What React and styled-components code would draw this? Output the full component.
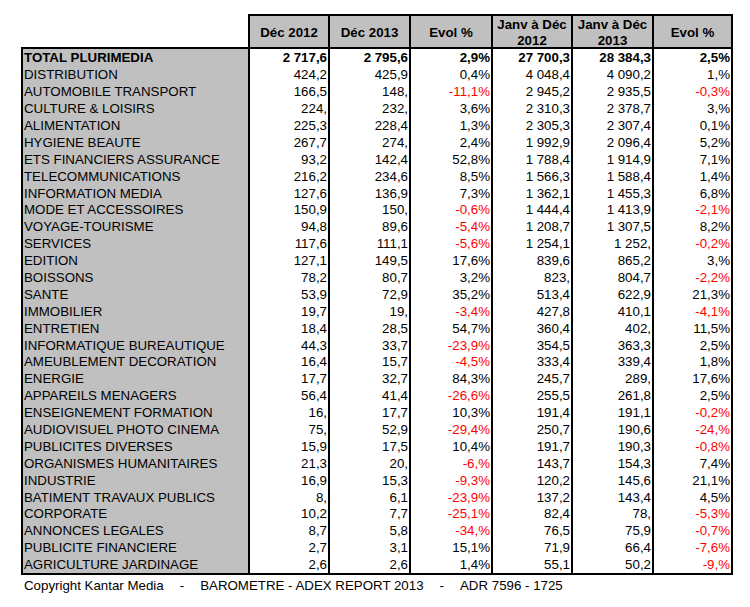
import styled, { createGlobalStyle } from "styled-components";

const GlobalStyle = createGlobalStyle`
  html, body {
    margin: 0;
    background: #fff;
  }
  body {
    font-family: "Liberation Sans", Arial, sans-serif;
    color: #000;
  }
  * { box-sizing: border-box; }
`;

const COLS = "227px 80px 81px 82px 80px 81px 81px";
const ROW_H = 16.9;

const rows = [
  ["TOTAL PLURIMEDIA", "2 717,6", "2 795,6", "2,9%", "27 700,3", "28 384,3", "2,5%"],
  ["DISTRIBUTION", "424,2", "425,9", "0,4%", "4 048,4", "4 090,2", "1,%"],
  ["AUTOMOBILE TRANSPORT", "166,5", "148,", "-11,1%", "2 945,2", "2 935,5", "-0,3%"],
  ["CULTURE & LOISIRS", "224,", "232,", "3,6%", "2 310,3", "2 378,7", "3,%"],
  ["ALIMENTATION", "225,3", "228,4", "1,3%", "2 305,3", "2 307,4", "0,1%"],
  ["HYGIENE BEAUTE", "267,7", "274,", "2,4%", "1 992,9", "2 096,4", "5,2%"],
  ["ETS FINANCIERS ASSURANCE", "93,2", "142,4", "52,8%", "1 788,4", "1 914,9", "7,1%"],
  ["TELECOMMUNICATIONS", "216,2", "234,6", "8,5%", "1 566,3", "1 588,4", "1,4%"],
  ["INFORMATION MEDIA", "127,6", "136,9", "7,3%", "1 362,1", "1 455,3", "6,8%"],
  ["MODE ET ACCESSOIRES", "150,9", "150,", "-0,6%", "1 444,4", "1 413,9", "-2,1%"],
  ["VOYAGE-TOURISME", "94,8", "89,6", "-5,4%", "1 208,7", "1 307,5", "8,2%"],
  ["SERVICES", "117,6", "111,1", "-5,6%", "1 254,1", "1 252,", "-0,2%"],
  ["EDITION", "127,1", "149,5", "17,6%", "839,6", "865,2", "3,%"],
  ["BOISSONS", "78,2", "80,7", "3,2%", "823,", "804,7", "-2,2%"],
  ["SANTE", "53,9", "72,9", "35,2%", "513,4", "622,9", "21,3%"],
  ["IMMOBILIER", "19,7", "19,", "-3,4%", "427,8", "410,1", "-4,1%"],
  ["ENTRETIEN", "18,4", "28,5", "54,7%", "360,4", "402,", "11,5%"],
  ["INFORMATIQUE BUREAUTIQUE", "44,3", "33,7", "-23,9%", "354,5", "363,3", "2,5%"],
  ["AMEUBLEMENT DECORATION", "16,4", "15,7", "-4,5%", "333,4", "339,4", "1,8%"],
  ["ENERGIE", "17,7", "32,7", "84,3%", "245,7", "289,", "17,6%"],
  ["APPAREILS MENAGERS", "56,4", "41,4", "-26,6%", "255,5", "261,8", "2,5%"],
  ["ENSEIGNEMENT FORMATION", "16,", "17,7", "10,3%", "191,4", "191,1", "-0,2%"],
  ["AUDIOVISUEL PHOTO CINEMA", "75,", "52,9", "-29,4%", "250,7", "190,6", "-24,%"],
  ["PUBLICITES DIVERSES", "15,9", "17,5", "10,4%", "191,7", "190,3", "-0,8%"],
  ["ORGANISMES HUMANITAIRES", "21,3", "20,", "-6,%", "143,7", "154,3", "7,4%"],
  ["INDUSTRIE", "16,9", "15,3", "-9,3%", "120,2", "145,6", "21,1%"],
  ["BATIMENT TRAVAUX PUBLICS", "8,", "6,1", "-23,9%", "137,2", "143,4", "4,5%"],
  ["CORPORATE", "10,2", "7,7", "-25,1%", "82,4", "78,", "-5,3%"],
  ["ANNONCES LEGALES", "8,7", "5,8", "-34,%", "76,5", "75,9", "-0,7%"],
  ["PUBLICITE FINANCIERE", "2,7", "3,1", "15,1%", "71,9", "66,4", "-7,6%"],
  ["AGRICULTURE JARDINAGE", "2,6", "2,6", "1,4%", "55,1", "50,2", "-9,%"],
];

const headers = [
  ["Déc 2012"],
  ["Déc 2013"],
  ["Evol %"],
  ["Janv à Déc", "2012"],
  ["Janv à Déc", "2013"],
  ["Evol %"],
];

const Page = styled.div`
  padding: 14px 0 0 21px;
  font-size: 13.3px;
`;

const Sheet = styled.div`
  display: flex;
  flex-direction: column;
  width: 712px;
`;

const HeadRow = styled.div`
  display: grid;
  grid-template-columns: ${COLS};
  height: 33px;
`;

const Blank = styled.div``;

const HeadCell = styled.div`
  background: #c0c0c0;
  border-top: 2px solid #000;
  border-left: 2px solid #000;
  border-right: ${(p) => (p.$end ? "2px solid #000" : "none")};
  display: flex;
  flex-direction: column;
  align-items: center;
  justify-content: center;
  font-weight: bold;
  line-height: 16px;
  text-align: center;
  padding-top: 1px;
`;

const Row = styled.div`
  display: grid;
  grid-template-columns: ${COLS};
  height: ${(p) => ROW_H + (p.$first ? 2 : 0) + (p.$last ? 2 : 0)}px;
  font-weight: ${(p) => (p.$bold ? "bold" : "normal")};

  & > div {
    border-left: 2px solid #000;
    border-top: ${(p) => (p.$first ? "2px solid #000" : "none")};
    border-bottom: ${(p) => (p.$last ? "2px solid #000" : "none")};
  }
  & > div:last-child {
    border-right: 2px solid #000;
  }
`;

const Label = styled.div`
  background: #c0c0c0;
  display: flex;
  align-items: center;
  padding: 1px 0 0 1px;
  white-space: nowrap;
  overflow: hidden;
`;

const Num = styled.div`
  background: #fff;
  display: flex;
  align-items: center;
  justify-content: flex-end;
  padding: 1px 1px 0 0;
  white-space: nowrap;
  color: ${(p) => (p.$neg ? "#ff0000" : "#000")};
`;

const Footer = styled.div`
  display: flex;
  gap: 16px;
  padding: 2px 0 0 3px;
  line-height: 17px;
  white-space: nowrap;
`;

export default function App() {
  return (
    <Page>
      <GlobalStyle />
      <Sheet>
        <HeadRow>
          <Blank />
          {headers.map((h, i) => (
            <HeadCell key={i} $end={i === headers.length - 1}>
              {h.map((line) => (
                <span key={line}>{line}</span>
              ))}
            </HeadCell>
          ))}
        </HeadRow>
        {rows.map((r, i) => (
          <Row key={r[0]} $first={i === 0} $last={i === rows.length - 1} $bold={i === 0}>
            <Label>{r[0]}</Label>
            {r.slice(1).map((v, j) => (
              <Num key={j} $neg={v.startsWith("-")}>
                {v}
              </Num>
            ))}
          </Row>
        ))}
      </Sheet>
      <Footer>
        <span>Copyright Kantar Media</span>
        <span>-</span>
        <span>BAROMETRE - ADEX REPORT 2013</span>
        <span>-</span>
        <span>ADR 7596 - 1725</span>
      </Footer>
    </Page>
  );
}
